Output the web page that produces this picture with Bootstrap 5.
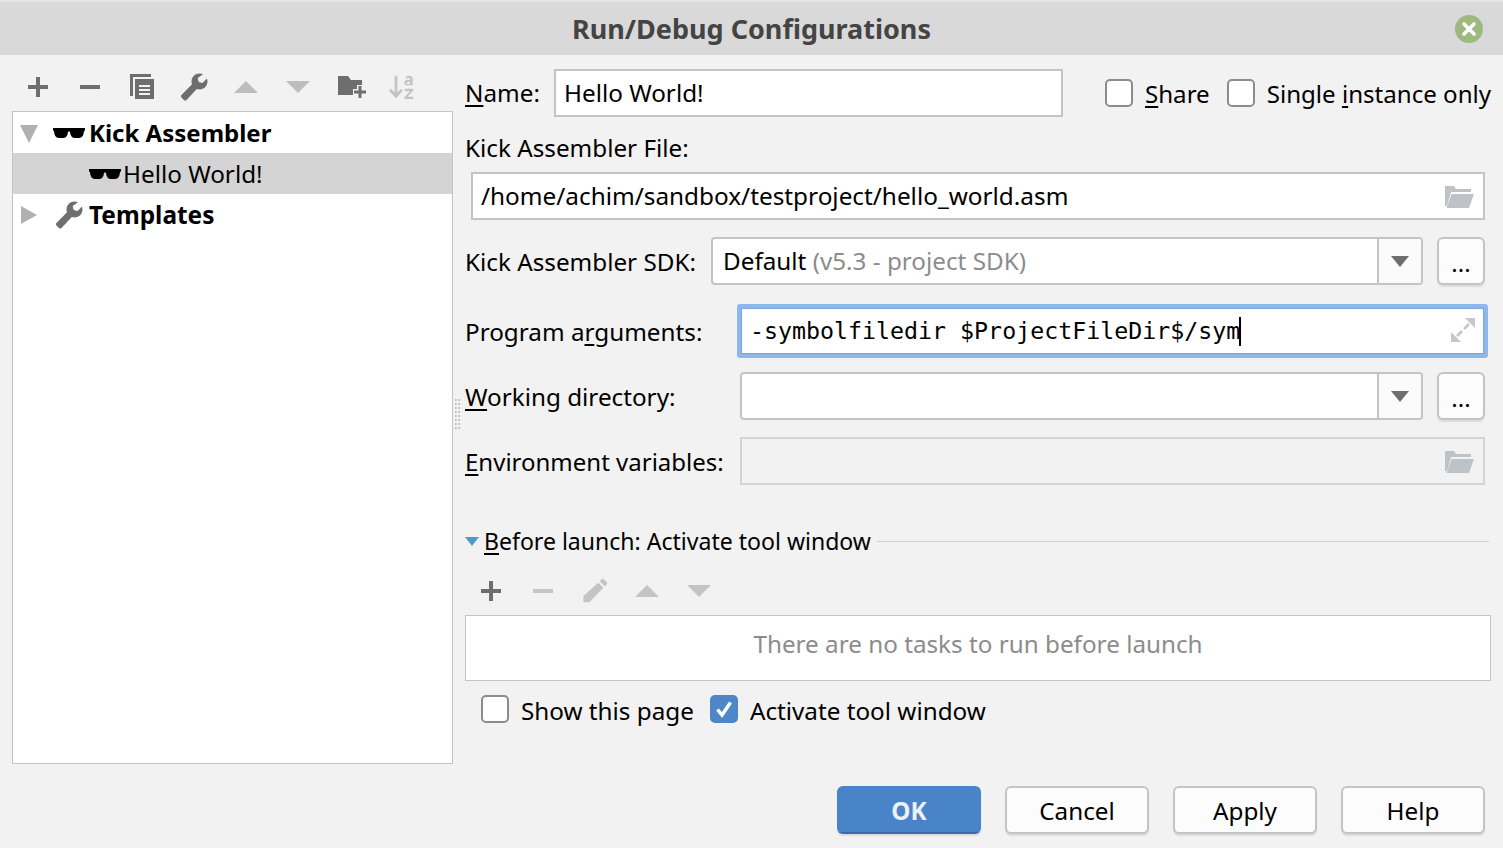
<!DOCTYPE html>
<html lang="en">
<head>
  <meta charset="UTF-8" />
  <title>Run/Debug Configurations</title>
  <link href="https://cdn.jsdelivr.net/npm/bootstrap@5.3.0/dist/css/bootstrap.min.css" rel="stylesheet" />
  <style>
    html, body { height: 100%; }
    body { background: #f2f2f2; color: #000; font-family: "Noto Sans", sans-serif; font-size: 24.25px; line-height: 32px; overflow: hidden; }
    svg { display: block; flex: none; }
    u { text-underline-offset: 3px; text-decoration-thickness: 2px; }

    .title-bar { height: 55px; background: #d9d9d9; border-top: 2px solid #e6e6e6; padding-right: 20px; }
    .title-text { flex: 1; text-align: center; font-weight: 700; font-size: 27px; color: #444; padding-left: 48px; }

    .side-pane { width: 453px; flex: none; padding: 0 0 0 12px; }
    .tool-row { height: 56px; padding-left: 13px; padding-top: 8px; gap: 26px; }
    .tool-row svg, .sub-tools svg { width: 26px; height: 26px; }
    .tool-row svg.wide-icon, .sub-tools svg.wide-icon { width: 28px; height: 28px; margin: 0 -1px; }
    .tool-row svg.folder-icon { width: 28px; height: 28px; margin: 4px -3px 0 1px; }
    .tree-box { width: 441px; height: 653px; background: #fff; border: 1px solid #c4c4c4; padding: 0; }
    .tree-row { height: 41px; padding-left: 6px; }
    .tree-row.picked { background: #d4d4d4; }
    .tree-name { font-weight: 700; font-size: 24px; }
    .tree-name.stretched { font-size: 24.4px; }
    .twisty { width: 20px; height: 20px; }

    .grip { width: 12px; flex: none; position: relative; }
    .grip-dots { position: absolute; left: 1px; top: 343px; width: 7px; height: 31px; background-image: radial-gradient(#bdbdbd 1px, transparent 1px); background-size: 3.5px 4px; }

    .form-pane { flex: 1; padding-right: 12px; padding-top: 14px; min-width: 0; }
    .field-row { display: flex; align-items: center; }
    .field-label { flex: none; padding-top: 2px; }
    .env-label { font-size: 24px; }
    .top-option { font-size: 24.1px; margin-top: -2px; padding-top: 4px; margin-left: 12px; white-space: nowrap; }
    .ide-input.form-control { height: 48px; border: 2px solid #c4c4c4; border-radius: 0; background-color: #fff; font-size: 24.25px; line-height: 32px; padding: 0 8px 2px; color: #000; box-shadow: none; }
    .ide-input.path-input.form-control { font-size: 24.33px; }
    .ide-input.form-control:disabled { background: #f2f2f2; border-color: #d4d4d4; }
    .input-wrap { position: relative; min-width: 0; }
    .name-wrap { width: 509px; flex: none; }
    .input-icon { position: absolute; right: 11px; top: 14px; width: 30px; height: 22px; }

    .combo { display: flex; height: 48px; border: 2px solid #c4c4c4; border-radius: 4px; background: #fff; overflow: hidden; }
    .combo-value { flex: 1; padding: 6px 10px; line-height: 32px; }
    .combo-arrow { width: 44px; flex: none; border-left: 2px solid #c4c4c4; background: #fbfbfb; display: flex; align-items: center; justify-content: center; }
    .muted-text { color: #8c8c8c; }
    .dots-btn.btn { width: 48px; height: 48px; flex: none; padding: 0; margin-left: 14px; border: 2px solid #c4c4c4; border-radius: 6px; background: #fcfcfc; color: #000; font-size: 24px; line-height: 48px; box-shadow: 0 2px 1px #dcdcdc; }

    .focus-box { margin-right: 3px; flex: 1; position: relative; border: 4px solid #8db8ea; border-radius: 3px; }
    .mono-text { font-family: "DejaVu Sans Mono", monospace; font-size: 23.27px; line-height: 44px; height: 46px; border: 1px solid #79a7dd; background: #fff; padding: 0 8px; white-space: pre; }
    .caret-bar { display: inline-block; width: 2px; height: 29px; background: #000; vertical-align: -7px; margin-left: -1px; }

    .section-title { font-size: 23.05px; }
    .section-line { flex: 1; height: 1px; background: #d1d1d1; margin-left: 6px; margin-right: 2px; }
    .sub-tools { height: 44px; padding-left: 13px; padding-bottom: 4px; gap: 26px; }
    .empty-list { height: 66px; background: #fff; border: 1px solid #c4c4c4; color: #8c8c8c; display: flex; align-items: center; justify-content: center; padding-bottom: 8px; }

    .ide-check { width: 28px; height: 28px; flex: none; border: 2px solid #8c8c8c; border-radius: 5px; background: #fff; }
    .ide-check.checked { background: #4d86c9; border-color: #4d86c9; display: flex; align-items: center; justify-content: center; }

    .button-row { gap: 24px; padding-right: 6px; margin-top: 59px; }
    .ide-btn.btn { width: 144px; height: 48px; padding: 0; font-size: 24.25px; line-height: 46px; border: 2px solid #c4c4c4; border-radius: 6px; background: #fcfcfc; color: #000; box-shadow: 0 2px 1px #dcdcdc; }
    .ide-btn.btn-primary { background: #4a84c8; border-color: #4a84c8; border-bottom-color: #3a6cab; color: #edf1f6; font-weight: 700; }
  </style>
</head>
<body>
  <svg width="0" height="0" style="position:absolute">
    <symbol id="i-wrench" viewBox="0 0 28 28"><path d="M19.500.5c-4.400 0-8 3.500-8 8 0 1 .2 2 .5 2.800L1 22.500V24l3.500 3.500H6L16.800 16c.9.300 1.800.5 2.700.5 4.400 0 8-3.600 8-8 0-1.100-.2-2-.6-3l-4.400 4.400-3.800-1-1-3.800L23 1.200C21.900.8 20.700.5 19.500.5z"/></symbol>
    <symbol id="i-shades" viewBox="0 0 32 12"><path d="M0 1h32v2.500l-1 .5c-.3 3-1 7-5 7h-4c-3 0-4.500-2-5-6-.7-.6-1.300-.6-2 0C14.500 9 13 11 10 11H6C2 11 1.300 7 1 4L0 3.500z"/></symbol>
    <symbol id="i-folder" viewBox="0 0 30 22"><path fill="#bdc3c7" d="M1 0h9l2 3h15v3H7L3 20H1z"/><path fill="#bdc3c7" d="M7.500 8H30l-5 14H2.500z"/></symbol>
  </svg>

  <div class="title-bar d-flex align-items-center">
    <div class="title-text">Run/Debug Configurations</div>
    <svg width="28" height="28" viewBox="0 0 28 28"><circle cx="14" cy="14" r="14" fill="#9eb97f"/><path d="M9 9l10 10M19 9L9 19" stroke="#fff" stroke-width="3.600" stroke-linecap="round"/></svg>
  </div>

  <div class="d-flex">
    <div class="side-pane">
      <div class="tool-row d-flex align-items-center">
        <svg viewBox="0 0 26 26" fill="#6e6e6e"><path d="M11 3h4v8h8v4h-8v8h-4v-8H3v-4h8z"/></svg>
        <svg viewBox="0 0 26 26" fill="#6e6e6e"><path d="M3 11h20v4H3z"/></svg>
        <svg viewBox="0 0 26 26" fill="#6e6e6e"><path d="M1 0h21v3H4v19H1z"/><path fill-rule="evenodd" d="M6 5h19v20H6zm4 6v2h11v-2zm0 4v2h11v-2zm0 4v2h11v-2z"/></svg>
        <svg class="wide-icon" viewBox="0 0 28 28" fill="#6e6e6e"><use href="#i-wrench"/></svg>
        <svg viewBox="0 0 26 26" fill="#bdbdbd"><path d="M13 7l12 12H1z"/></svg>
        <svg viewBox="0 0 26 26" fill="#bdbdbd"><path d="M1 7h24L13 19z"/></svg>
        <svg class="folder-icon" viewBox="0 0 28 28" fill="#6e6e6e"><path d="M0 1h10l3 4h11v5h-5v4h-4v6H0z"/><path d="M20.500 11h3v4.500H28v3h-4.500V23h-3v-4.500H16v-3h4.500z"/></svg>
        <svg viewBox="0 0 28 28" fill="#c4c4c4"><path d="M6 2h3v18l4-4 2 2-7.500 8L0 18l2-2 4 4z"/><path fill-rule="evenodd" d="M18 3.500c1-1 2-1.500 3.500-1.500 2.500 0 4 1 4 3.500V12h-2.500v-1c-.8.800-1.800 1.300-3 1.300-2 0-3.500-1.200-3.500-3 0-2 1.600-3 4-3h2.500c0-1.500-.6-2-1.700-2-1 0-1.700.3-2.300 1zm5 5H20.800c-1 0-1.800.4-1.800 1.200 0 .7.600 1 1.400 1 1.200 0 2.600-.6 2.600-2.200zM17 16h9v2l-6 6.500h6V27h-9.500v-2l6-6.500H17z"/></svg>
      </div>
      <div class="tree-box">
        <div class="tree-row d-flex align-items-center">
          <svg class="twisty" viewBox="0 0 20 20" fill="#b0b0b0"><path d="M1 2h18l-9 18z"/></svg>
          <svg style="margin-left:14px" width="32" height="12" viewBox="0 0 32 12" fill="#000"><use href="#i-shades"/></svg>
          <span class="tree-name ms-1">Kick Assembler</span>
        </div>
        <div class="tree-row picked d-flex align-items-center">
          <svg style="margin-left:70px" width="32" height="12" viewBox="0 0 32 12" fill="#000"><use href="#i-shades"/></svg>
          <span style="margin-left:2px">Hello World!</span>
        </div>
        <div class="tree-row d-flex align-items-center">
          <svg class="twisty" viewBox="0 0 20 20" fill="#b0b0b0"><path d="M2 1l16 9-16 9z"/></svg>
          <svg class="ms-3" width="28" height="28" viewBox="0 0 28 28" fill="#6e6e6e"><use href="#i-wrench"/></svg>
          <span class="tree-name stretched" style="margin-left:6px">Templates</span>
        </div>
      </div>
    </div>

    <div class="grip"><div class="grip-dots"></div></div>

    <div class="form-pane">
      <div class="field-row">
        <span class="field-label" style="width:89px;padding-top:0"><u>N</u>ame:</span>
        <div class="input-wrap name-wrap"><input class="form-control ide-input" value="Hello World!" /></div>
        <div class="ide-check" style="margin-left:42px"></div>
        <span class="top-option"><u>S</u>hare</span>
        <div class="ide-check" style="margin-left:17px"></div>
        <span class="top-option">Single <u>i</u>nstance only</span>
      </div>

      <div style="margin-top:15px">Kick Assembler File:</div>
      <div class="input-wrap" style="margin:8px 6px 0 6px">
        <input class="form-control ide-input path-input" value="/home/achim/sandbox/testproject/hello_world.asm" />
        <svg class="input-icon"><use href="#i-folder"/></svg>
      </div>

      <div class="field-row" style="margin-top:17px">
        <span class="field-label" style="width:246px">Kick Assembler SDK:</span>
        <div class="combo flex-grow-1">
          <div class="combo-value">Default <span class="muted-text">(v5.3 - project SDK)</span></div>
          <div class="combo-arrow"><svg width="18" height="11" viewBox="0 0 18 11" fill="#6e6e6e"><path d="M0 0h18L9 11z"/></svg></div>
        </div>
        <button class="btn dots-btn" type="button">...</button>
        <div style="width:6px"></div>
      </div>

      <div class="field-row" style="margin-top:19px">
        <span class="field-label" style="width:272px">Program a<u>r</u>guments:</span>
        <div class="focus-box">
          <div class="mono-text">-symbolfiledir $ProjectFileDir$/sym<span class="caret-bar"></span></div>
          <svg class="input-icon" style="right:8px;top:9px;width:26px;height:26px" viewBox="0 0 26 26" fill="#c4c8cc"><path d="M15 1h10v10z"/><path d="M11 25H1V15z"/><path d="M19 7l-5 5M12 14l-5 5" stroke="#c4c8cc" stroke-width="2.600"/></svg>
        </div>
      </div>

      <div class="field-row" style="margin-top:14px">
        <span class="field-label" style="width:275px"><u>W</u>orking directory:</span>
        <div class="combo flex-grow-1">
          <div class="combo-value"></div>
          <div class="combo-arrow"><svg width="18" height="11" viewBox="0 0 18 11" fill="#6e6e6e"><path d="M0 0h18L9 11z"/></svg></div>
        </div>
        <button class="btn dots-btn" type="button">...</button>
        <div style="width:6px"></div>
      </div>

      <div class="field-row" style="margin-top:17px">
        <span class="field-label env-label" style="width:275px"><u>E</u>nvironment variables:</span>
        <div class="input-wrap flex-grow-1" style="margin-right:6px">
          <input class="form-control ide-input" disabled />
          <svg class="input-icon"><use href="#i-folder"/></svg>
        </div>
      </div>

      <div class="field-row" style="margin-top:40px">
        <svg width="14" height="9" viewBox="0 0 14 9" fill="#4f9bc8"><path d="M0 0h14L7 9z"/></svg>
        <span class="section-title" style="margin-left:5px"><u>B</u>efore launch: Activate tool window</span>
        <div class="section-line"></div>
      </div>

      <div class="sub-tools d-flex align-items-center" style="margin-top:14px">
        <svg viewBox="0 0 26 26" fill="#6e6e6e"><path d="M11 3h4v8h8v4h-8v8h-4v-8H3v-4h8z"/></svg>
        <svg viewBox="0 0 26 26" fill="#c4c4c4"><path d="M3 11h20v4H3z"/></svg>
        <svg viewBox="0 0 28 28" fill="#c4c4c4"><path d="M21 1.500c.8-.8 2-.8 2.800 0l2.700 2.700c.8.800.8 2 0 2.800l-2 2-5.500-5.500zM17.500 5L23 10.500 8 26H1.500v-6.500z"/></svg>
        <svg viewBox="0 0 26 26" fill="#c4c4c4"><path d="M13 7l12 12H1z"/></svg>
        <svg viewBox="0 0 26 26" fill="#c4c4c4"><path d="M1 7h24L13 19z"/></svg>
      </div>

      <div class="empty-list">There are no tasks to run before launch</div>

      <div class="field-row" style="margin-top:10px;padding-left:16px">
        <div class="ide-check"></div>
        <span class="ms-2 ps-1" style="margin-top:4px">Show this page</span>
        <div class="ide-check checked" style="margin-left:16px"><svg width="18" height="18" viewBox="0 0 18 18"><path d="M2.500 9.500l4.500 5.500L15.500 2.500" fill="none" stroke="#fff" stroke-width="3.500"/></svg></div>
        <span class="ms-2 ps-1" style="margin-top:4px">Activate tool window</span>
      </div>

      <div class="button-row d-flex justify-content-end">
        <button class="btn btn-primary ide-btn" type="button">OK</button>
        <button class="btn ide-btn" type="button">Cancel</button>
        <button class="btn ide-btn" type="button">Apply</button>
        <button class="btn ide-btn" type="button">Help</button>
      </div>
    </div>
  </div>
</body>
</html>
